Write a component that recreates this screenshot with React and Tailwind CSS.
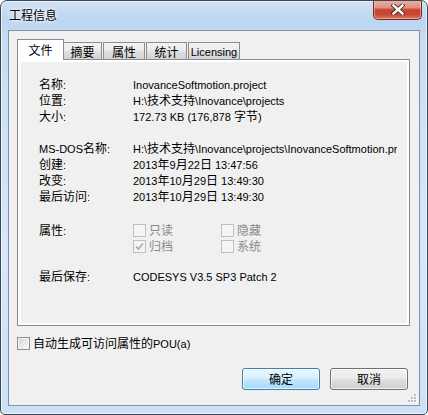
import React from "react";

function T({ children }) {
  const s = String(children);
  const parts = s.split(/([\u3000-\u9fff\uff00-\uffef]+)/).filter((p) => p !== "");
  return (
    <>
      {parts.map((p, i) =>
        /[\u3000-\u9fff\uff00-\uffef]/.test(p) ? (
          <span key={i} className="text-[12px]">{p}</span>
        ) : (
          <span key={i} className="font-['Liberation_Sans','Noto_Sans_CJK_SC',sans-serif] text-[11px]">{p}</span>
        )
      )}
    </>
  );
}

function Row({ label, value }) {
  return (
    <div className="flex h-4 items-center leading-4">
      <div className="w-[94px] shrink-0 whitespace-nowrap"><T>{label}</T></div>
      <div className="w-[264px] overflow-hidden whitespace-nowrap"><T>{value}</T></div>
    </div>
  );
}

function DisCb({ checked, label }) {
  return (
    <div className="flex h-4 w-[88px] items-center gap-[3px] text-[#8a8a8a]">
      <span className="flex h-[13px] w-[13px] shrink-0 items-center justify-center border border-[#c0c0c0] bg-[#f4f4f4]">
        {checked && (
          <svg width="9" height="9" viewBox="0 0 9 9">
            <path d="M1 4.5 L3.5 7 L8 1.5" fill="none" stroke="#a8a8a8" strokeWidth="1.6" />
          </svg>
        )}
      </span>
      <span className="whitespace-nowrap">{label}</span>
    </div>
  );
}

function Tab({ children, w, selected, className = "" }) {
  if (selected) {
    return (
      <div
        className={`relative z-10 -mb-px flex h-[21px] items-center justify-center border border-b-0 border-[#898c95] bg-white ${className}`}
        style={{ width: w }}
      >
        <span className="-mt-[1px]">{children}</span>
      </div>
    );
  }
  return (
    <div
      className={`flex h-[17px] items-center justify-center border border-b-0 border-[#898c95] bg-[linear-gradient(180deg,#f3f3f3_0%,#ececec_45%,#dedede_55%,#d2d2d2_100%)] ${className}`}
      style={{ width: w }}
    >
      <span className="mt-[1px]">{children}</span>
    </div>
  );
}

export default function App() {
  return (
    <div className="font-['Noto_Sans_CJK_SC',sans-serif] text-[12px] text-black">
      <div className="relative flex h-[415px] w-[428px] flex-col overflow-hidden rounded-t-[7px] rounded-b-[5px] border border-[#3b4756] bg-[linear-gradient(180deg,#cfe1f4_0%,#bcd5f0_20px,#c8ddf4_40px,#d6e7f9_60%,#cde1f6_100%)] shadow-[inset_0_0_0_1px_rgba(255,255,255,0.65)]">
        {/* title bar */}
        <div className="flex h-[29px] shrink-0 items-start justify-between">
          <div className="pl-2 pt-[6px] leading-4 text-black [text-shadow:0_0_6px_#ffffff,0_0_3px_#ffffff]">
            工程信息
          </div>
          <div className="mr-[5px] -mt-px flex h-[20px] w-[49px] items-center justify-center rounded-b-[5px] border border-t-0 border-[#7a2a1f] bg-[linear-gradient(180deg,#eab2a4_0%,#df9181_40%,#c6412e_52%,#c84a37_78%,#dc7a64_100%)] shadow-[inset_0_0_0_1px_rgba(255,220,210,0.45)]">
            <svg width="14" height="11" viewBox="0 0 14 11">
              <path d="M2.5 1.5 L11.5 9.5 M11.5 1.5 L2.5 9.5" stroke="#3a2a28" strokeWidth="4.2" strokeLinecap="square" />
              <path d="M2.5 1.5 L11.5 9.5 M11.5 1.5 L2.5 9.5" stroke="#ffffff" strokeWidth="2.4" strokeLinecap="square" />
            </svg>
          </div>
        </div>

        {/* client area */}
        <div className="relative mx-[7px] flex h-[376px] shrink-0 flex-col border border-[#8293a8] bg-[#f0f0f0]">
          {/* tabs */}
          <div className="mt-2 flex h-[20px] items-end pl-2">
            <Tab selected w={47}>文件</Tab>
            <Tab w={39} className="-ml-px">摘要</Tab>
            <Tab w={42} className="ml-[1px]">属性</Tab>
            <Tab w={41} className="ml-[1px]">统计</Tab>
            <Tab w={52} className="ml-[1px]"><T>Licensing</T></Tab>
          </div>
          {/* panel */}
          <div className="ml-2 h-[267px] w-[393px] border border-[#898c95] bg-white pb-[2px] pl-[3px] pr-[2px] pt-[2px]">
            <div className="h-full bg-[#f0f0f0] pl-[18px] pt-[14px]">
              <Row label="名称:" value="InovanceSoftmotion.project" />
              <Row label="位置:" value="H:\技术支持\Inovance\projects" />
              <Row label="大小:" value="172.73 KB (176,878 字节)" />
              <div className="h-4" />
              <Row label="MS-DOS名称:" value="H:\技术支持\Inovance\projects\InovanceSoftmotion.project" />
              <Row label="创建:" value="2013年9月22日 13:47:56" />
              <Row label="改变:" value="2013年10月29日 13:49:30" />
              <Row label="最后访问:" value="2013年10月29日 13:49:30" />
              <div className="mt-[18px] flex">
                <div className="h-4 w-[94px] shrink-0 leading-4"><T>属性:</T></div>
                <div className="grid grid-cols-[88px_88px]">
                  <DisCb label="只读" />
                  <DisCb label="隐藏" />
                  <DisCb checked label="归档" />
                  <DisCb label="系统" />
                </div>
              </div>
              <div className="mt-[14px]">
                <Row label="最后保存:" value="CODESYS V3.5 SP3 Patch 2" />
              </div>
            </div>
          </div>

          {/* auto generate checkbox */}
          <div className="ml-2 mt-[11px] flex h-[13px] items-center gap-[3px]">
            <span className="h-[13px] w-[13px] shrink-0 border border-[#8e8f8f] bg-[linear-gradient(135deg,#cfcfcf_0%,#e9e9e9_50%,#fafafa_100%)] shadow-[inset_0_0_0_1px_#f4f4f4]" />
            <span className="whitespace-nowrap leading-4"><T>自动生成可访问属性的POU(a)</T></span>
          </div>

          {/* buttons */}
          <div className="mt-[18px] flex justify-end gap-[10px] pr-[11px]">
            <button className="flex h-[22px] w-[78px] items-center justify-center rounded-[3px] border border-[#3c7fb1] bg-[linear-gradient(180deg,#eaf6fd_0%,#d9f0fc_45%,#bee6fd_55%,#a7d9f5_100%)] shadow-[inset_0_0_0_1px_rgba(255,255,255,0.7)] text-[12px] leading-4">
              确定
            </button>
            <button className="flex h-[22px] w-[78px] items-center justify-center rounded-[3px] border border-[#707070] bg-[linear-gradient(180deg,#f2f2f2_0%,#ebebeb_45%,#dddddd_55%,#cfcfcf_100%)] shadow-[inset_0_0_0_1px_rgba(255,255,255,0.7)] text-[12px] leading-4">
              取消
            </button>
          </div>

          {/* resize grip */}
          <svg className="absolute bottom-[2px] right-[2px]" width="10" height="10" viewBox="0 0 10 10">
            {[
              [7, 1], [7, 4], [4, 4], [7, 7], [4, 7], [1, 7],
            ].map(([x, y], i) => (
              <g key={i}>
                <rect x={x + 1} y={y + 1} width="2" height="2" fill="#ffffff" />
                <rect x={x} y={y} width="2" height="2" fill="#b8bcc4" />
              </g>
            ))}
          </svg>
        </div>
      </div>
    </div>
  );
}
